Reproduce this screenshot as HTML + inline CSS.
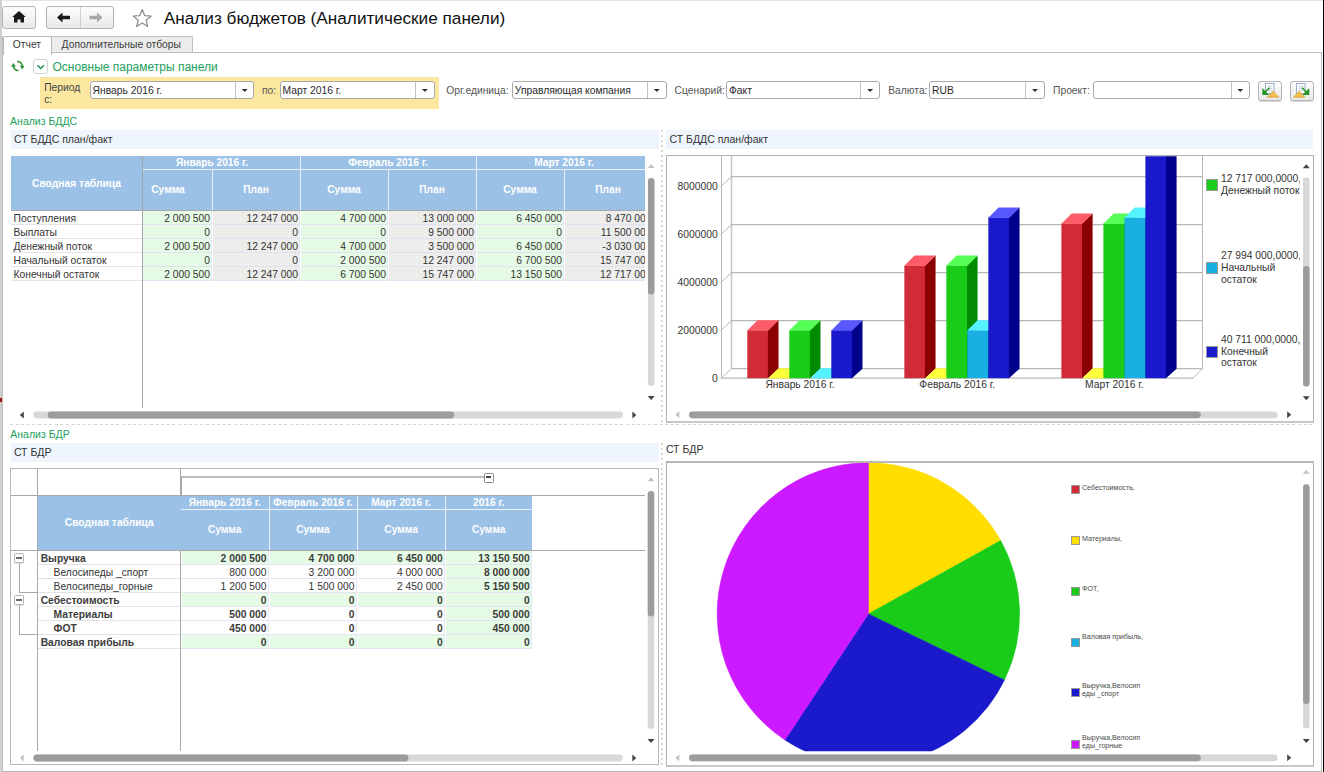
<!DOCTYPE html>
<html><head><meta charset="utf-8"><title>Анализ бюджетов</title>
<style>
html,body{margin:0;padding:0;}
body{width:1324px;height:772px;overflow:hidden;position:relative;background:#fff;font-family:"Liberation Sans", sans-serif;}
.t{position:absolute;white-space:nowrap;}
.r{position:absolute;box-sizing:content-box;}
.btn{position:absolute;border:1px solid #b4b4b4;border-radius:3px;background:linear-gradient(#fdfdfd,#e9e9e9);}
svg.ov{position:absolute;left:0;top:0;}
</style></head><body>
<div class="r" style="left:0.00px;top:0.00px;width:1323.00px;height:1.00px;background:#e2e2e2;"></div>
<div class="r" style="left:0.00px;top:0.00px;width:2.00px;height:772.00px;background:#cfcfcf;"></div>
<div class="r" style="left:2.00px;top:36.00px;width:1.00px;height:736.00px;background:#bdbdbd;"></div>
<div class="r" style="left:0.00px;top:398.00px;width:2.00px;height:4.00px;background:#a81212;"></div>
<div class="btn" style="left:2px;top:6px;width:32px;height:21px;"></div>
<div class="btn" style="left:46px;top:6px;width:66px;height:21px;"></div>
<div class="r" style="left:80.00px;top:7.00px;width:1.00px;height:21.00px;background:#cfcfcf;"></div>
<div class="t" style="left:163.80px;top:8.93px;font-size:17.20px;line-height:19.21px;color:#111;">Анализ бюджетов (Аналитические панели)</div>
<div class="r" style="left:51px;top:36px;width:140px;height:16px;background:#ececec;border:1px solid #c0c0c0;border-bottom:none;border-radius:2px 2px 0 0;"></div>
<div class="r" style="left:50.00px;top:52.00px;width:1272.00px;height:1.00px;background:#bcbcbc;"></div>
<div class="r" style="left:3px;top:35.5px;width:46.5px;height:18px;background:#fff;border:1px solid #b8b8b8;border-bottom:none;border-radius:2px 2px 0 0;"></div>
<div class="t" style="left:12.80px;top:39.08px;font-size:10.30px;line-height:11.51px;color:#3a3a3a;">Отчет</div>
<div class="t" style="left:61.60px;top:39.08px;font-size:10.30px;line-height:11.51px;color:#3a3a3a;">Дополнительные отборы</div>
<div class="r" style="left:1321.00px;top:52.00px;width:1.00px;height:720.00px;background:#bcbcbc;"></div>
<div class="r" style="left:1323.00px;top:0.00px;width:1.00px;height:772.00px;background:#000;"></div>
<div class="r" style="left:3.00px;top:771.00px;width:1319.00px;height:1.00px;background:#b8b8b8;"></div>
<div class="r" style="left:33.2px;top:59.2px;width:13.3px;height:13.3px;border:1px solid #d2d2d2;border-radius:3px;background:#fff;"></div>
<div class="t" style="left:52.50px;top:61.04px;font-size:12.00px;line-height:13.40px;color:#22a05c;">Основные параметры панели</div>
<div class="r" style="left:40.00px;top:77.00px;width:399.00px;height:32.00px;background:#fbe7a0;"></div>
<div class="t" style="left:44.20px;top:82.38px;font-size:10.30px;line-height:11.51px;color:#444;">Период</div>
<div class="t" style="left:44.20px;top:94.18px;font-size:10.30px;line-height:11.51px;color:#444;">с:</div>
<div class="r" style="left:89.8px;top:81px;width:162.6px;height:16px;border:1px solid #a9a9a9;border-radius:3px;background:#fff;"></div>
<div class="r" style="left:235.00px;top:82.00px;width:1.00px;height:16.00px;background:#c4c4c4;"></div>
<div class="t" style="left:92.60px;top:84.68px;font-size:10.30px;line-height:11.51px;color:#2a2a2a;">Январь 2016 г.</div>
<div class="t" style="left:262.00px;top:84.68px;font-size:10.30px;line-height:11.51px;color:#555;">по:</div>
<div class="r" style="left:279.8px;top:81px;width:153.0px;height:16px;border:1px solid #a9a9a9;border-radius:3px;background:#fff;"></div>
<div class="r" style="left:415.00px;top:82.00px;width:1.00px;height:16.00px;background:#c4c4c4;"></div>
<div class="t" style="left:282.60px;top:84.68px;font-size:10.30px;line-height:11.51px;color:#2a2a2a;">Март 2016 г.</div>
<div class="t" style="left:446.30px;top:84.68px;font-size:10.30px;line-height:11.51px;color:#555;">Орг.единица:</div>
<div class="r" style="left:512.0px;top:81px;width:152.6px;height:16px;border:1px solid #a9a9a9;border-radius:3px;background:#fff;"></div>
<div class="r" style="left:647.00px;top:82.00px;width:1.00px;height:16.00px;background:#c4c4c4;"></div>
<div class="t" style="left:514.80px;top:84.68px;font-size:10.30px;line-height:11.51px;color:#2a2a2a;">Управляющая компания</div>
<div class="t" style="left:674.50px;top:84.68px;font-size:10.30px;line-height:11.51px;color:#555;">Сценарий:</div>
<div class="r" style="left:726.2px;top:81px;width:152.1px;height:16px;border:1px solid #a9a9a9;border-radius:3px;background:#fff;"></div>
<div class="r" style="left:860.00px;top:82.00px;width:1.00px;height:16.00px;background:#c4c4c4;"></div>
<div class="t" style="left:729.00px;top:84.68px;font-size:10.30px;line-height:11.51px;color:#2a2a2a;">Факт</div>
<div class="t" style="left:888.20px;top:84.68px;font-size:10.30px;line-height:11.51px;color:#555;">Валюта:</div>
<div class="r" style="left:929.3px;top:81px;width:113.7px;height:16px;border:1px solid #a9a9a9;border-radius:3px;background:#fff;"></div>
<div class="r" style="left:1025.00px;top:82.00px;width:1.00px;height:16.00px;background:#c4c4c4;"></div>
<div class="t" style="left:932.10px;top:84.68px;font-size:10.30px;line-height:11.51px;color:#2a2a2a;">RUB</div>
<div class="t" style="left:1053.00px;top:84.68px;font-size:10.30px;line-height:11.51px;color:#555;">Проект:</div>
<div class="r" style="left:1093.0px;top:81px;width:155.0px;height:16px;border:1px solid #a9a9a9;border-radius:3px;background:#fff;"></div>
<div class="r" style="left:1230.50px;top:82.00px;width:1.00px;height:16.00px;background:#c4c4c4;"></div>
<div class="btn" style="left:1258.0px;top:80.5px;width:22px;height:18.5px;box-shadow:0 1px 0 #d8d8d8;"></div>
<div class="btn" style="left:1289.5px;top:80.5px;width:22px;height:18.5px;box-shadow:0 1px 0 #d8d8d8;"></div>
<div class="t" style="left:10.10px;top:115.70px;font-size:10.50px;line-height:11.73px;color:#22a05c;">Анализ БДДС</div>
<div class="r" style="left:10.50px;top:130.00px;width:648.50px;height:19.00px;background:#eef5fd;"></div>
<div class="t" style="left:14.00px;top:134.30px;font-size:10.50px;line-height:11.73px;color:#333;">СТ БДДС план/факт</div>
<div class="r" style="left:11px;top:155px;width:634px;height:260px;overflow:hidden;">
<div class="r" style="left:0.00px;top:0.80px;width:641.00px;height:54.20px;background:#9bc1e6;"></div>
<div class="r" style="left:131.00px;top:14.00px;width:510.00px;height:1.00px;background:#e8f0fa;"></div>
<div class="r" style="left:201.00px;top:15.00px;width:1.00px;height:40.00px;background:#e8f0fa;"></div>
<div class="r" style="left:289.00px;top:0.80px;width:1.00px;height:54.20px;background:#e8f0fa;"></div>
<div class="r" style="left:377.00px;top:15.00px;width:1.00px;height:40.00px;background:#e8f0fa;"></div>
<div class="r" style="left:465.00px;top:0.80px;width:1.00px;height:54.20px;background:#e8f0fa;"></div>
<div class="r" style="left:553.00px;top:15.00px;width:1.00px;height:40.00px;background:#e8f0fa;"></div>
<div class="r" style="left:131.00px;top:0.80px;width:1.00px;height:252.20px;background:#a6a6a6;"></div>
<div class="r" style="left:0.00px;top:54.50px;width:641.00px;height:1.50px;background:#a8a8a8;"></div>
<div class="t" style="left:0.00px;width:131.00px;text-align:center;top:22.68px;font-size:10.30px;line-height:11.51px;color:#fff;font-weight:bold;">Сводная таблица</div>
<div class="t" style="left:113.00px;width:176.00px;text-align:center;top:1.77px;font-size:10.20px;line-height:11.39px;color:#fff;font-weight:bold;">Январь 2016 г.</div>
<div class="t" style="left:289.00px;width:176.00px;text-align:center;top:1.77px;font-size:10.20px;line-height:11.39px;color:#fff;font-weight:bold;">Февраль 2016 г.</div>
<div class="t" style="left:465.00px;width:176.00px;text-align:center;top:1.77px;font-size:10.20px;line-height:11.39px;color:#fff;font-weight:bold;">Март 2016 г.</div>
<div class="t" style="left:113.00px;width:88.00px;text-align:center;top:28.97px;font-size:10.20px;line-height:11.39px;color:#fff;font-weight:bold;">Сумма</div>
<div class="t" style="left:201.00px;width:88.00px;text-align:center;top:28.97px;font-size:10.20px;line-height:11.39px;color:#fff;font-weight:bold;">План</div>
<div class="t" style="left:289.00px;width:88.00px;text-align:center;top:28.97px;font-size:10.20px;line-height:11.39px;color:#fff;font-weight:bold;">Сумма</div>
<div class="t" style="left:377.00px;width:88.00px;text-align:center;top:28.97px;font-size:10.20px;line-height:11.39px;color:#fff;font-weight:bold;">План</div>
<div class="t" style="left:465.00px;width:88.00px;text-align:center;top:28.97px;font-size:10.20px;line-height:11.39px;color:#fff;font-weight:bold;">Сумма</div>
<div class="t" style="left:553.00px;width:88.00px;text-align:center;top:28.97px;font-size:10.20px;line-height:11.39px;color:#fff;font-weight:bold;">План</div>
<div class="r" style="left:0.00px;top:69.00px;width:131.00px;height:1.00px;background:#e4e4e4;"></div>
<div class="t" style="left:2.50px;top:57.58px;font-size:10.30px;line-height:11.51px;color:#333;">Поступления</div>
<div class="r" style="left:132.00px;top:56.00px;width:69.00px;height:13.00px;background:#e6fbe6;"></div>
<div class="r" style="left:132.00px;top:69.00px;width:69.00px;height:1.00px;background:#e2e2f2;"></div>
<div class="r" style="left:200.00px;top:56.00px;width:1.00px;height:13.00px;background:#e8e8f2;"></div>
<div class="t" style="left:-1.00px;width:200px;text-align:right;top:57.58px;font-size:10.30px;line-height:11.51px;color:#333;">2 000 500</div>
<div class="r" style="left:202.00px;top:56.00px;width:87.00px;height:13.00px;background:#e7e7e7;background-image:linear-gradient(90deg,transparent 1px,#efefed 1px),linear-gradient(transparent 1px,#efefed 1px);background-size:2px 2px;"></div>
<div class="r" style="left:202.00px;top:69.00px;width:87.00px;height:1.00px;background:#e2e2f2;"></div>
<div class="r" style="left:288.00px;top:56.00px;width:1.00px;height:13.00px;background:#e8e8f2;"></div>
<div class="t" style="left:87.00px;width:200px;text-align:right;top:57.58px;font-size:10.30px;line-height:11.51px;color:#333;">12 247 000</div>
<div class="r" style="left:290.00px;top:56.00px;width:87.00px;height:13.00px;background:#e6fbe6;"></div>
<div class="r" style="left:290.00px;top:69.00px;width:87.00px;height:1.00px;background:#e2e2f2;"></div>
<div class="r" style="left:376.00px;top:56.00px;width:1.00px;height:13.00px;background:#e8e8f2;"></div>
<div class="t" style="left:175.00px;width:200px;text-align:right;top:57.58px;font-size:10.30px;line-height:11.51px;color:#333;">4 700 000</div>
<div class="r" style="left:378.00px;top:56.00px;width:87.00px;height:13.00px;background:#e7e7e7;background-image:linear-gradient(90deg,transparent 1px,#efefed 1px),linear-gradient(transparent 1px,#efefed 1px);background-size:2px 2px;"></div>
<div class="r" style="left:378.00px;top:69.00px;width:87.00px;height:1.00px;background:#e2e2f2;"></div>
<div class="r" style="left:464.00px;top:56.00px;width:1.00px;height:13.00px;background:#e8e8f2;"></div>
<div class="t" style="left:263.00px;width:200px;text-align:right;top:57.58px;font-size:10.30px;line-height:11.51px;color:#333;">13 000 000</div>
<div class="r" style="left:466.00px;top:56.00px;width:87.00px;height:13.00px;background:#e6fbe6;"></div>
<div class="r" style="left:466.00px;top:69.00px;width:87.00px;height:1.00px;background:#e2e2f2;"></div>
<div class="r" style="left:552.00px;top:56.00px;width:1.00px;height:13.00px;background:#e8e8f2;"></div>
<div class="t" style="left:351.00px;width:200px;text-align:right;top:57.58px;font-size:10.30px;line-height:11.51px;color:#333;">6 450 000</div>
<div class="r" style="left:554.00px;top:56.00px;width:87.00px;height:13.00px;background:#e7e7e7;background-image:linear-gradient(90deg,transparent 1px,#efefed 1px),linear-gradient(transparent 1px,#efefed 1px);background-size:2px 2px;"></div>
<div class="r" style="left:554.00px;top:69.00px;width:87.00px;height:1.00px;background:#e2e2f2;"></div>
<div class="r" style="left:640.00px;top:56.00px;width:1.00px;height:13.00px;background:#e8e8f2;"></div>
<div class="t" style="left:440.50px;width:200px;text-align:right;top:57.58px;font-size:10.30px;line-height:11.51px;color:#333;">8 470 000</div>
<div class="r" style="left:0.00px;top:83.00px;width:131.00px;height:1.00px;background:#e4e4e4;"></div>
<div class="t" style="left:2.50px;top:71.58px;font-size:10.30px;line-height:11.51px;color:#333;">Выплаты</div>
<div class="r" style="left:132.00px;top:70.00px;width:69.00px;height:13.00px;background:#e6fbe6;"></div>
<div class="r" style="left:132.00px;top:83.00px;width:69.00px;height:1.00px;background:#e2e2f2;"></div>
<div class="r" style="left:200.00px;top:70.00px;width:1.00px;height:13.00px;background:#e8e8f2;"></div>
<div class="t" style="left:-1.00px;width:200px;text-align:right;top:71.58px;font-size:10.30px;line-height:11.51px;color:#333;">0</div>
<div class="r" style="left:202.00px;top:70.00px;width:87.00px;height:13.00px;background:#e7e7e7;background-image:linear-gradient(90deg,transparent 1px,#efefed 1px),linear-gradient(transparent 1px,#efefed 1px);background-size:2px 2px;"></div>
<div class="r" style="left:202.00px;top:83.00px;width:87.00px;height:1.00px;background:#e2e2f2;"></div>
<div class="r" style="left:288.00px;top:70.00px;width:1.00px;height:13.00px;background:#e8e8f2;"></div>
<div class="t" style="left:87.00px;width:200px;text-align:right;top:71.58px;font-size:10.30px;line-height:11.51px;color:#333;">0</div>
<div class="r" style="left:290.00px;top:70.00px;width:87.00px;height:13.00px;background:#e6fbe6;"></div>
<div class="r" style="left:290.00px;top:83.00px;width:87.00px;height:1.00px;background:#e2e2f2;"></div>
<div class="r" style="left:376.00px;top:70.00px;width:1.00px;height:13.00px;background:#e8e8f2;"></div>
<div class="t" style="left:175.00px;width:200px;text-align:right;top:71.58px;font-size:10.30px;line-height:11.51px;color:#333;">0</div>
<div class="r" style="left:378.00px;top:70.00px;width:87.00px;height:13.00px;background:#e7e7e7;background-image:linear-gradient(90deg,transparent 1px,#efefed 1px),linear-gradient(transparent 1px,#efefed 1px);background-size:2px 2px;"></div>
<div class="r" style="left:378.00px;top:83.00px;width:87.00px;height:1.00px;background:#e2e2f2;"></div>
<div class="r" style="left:464.00px;top:70.00px;width:1.00px;height:13.00px;background:#e8e8f2;"></div>
<div class="t" style="left:263.00px;width:200px;text-align:right;top:71.58px;font-size:10.30px;line-height:11.51px;color:#333;">9 500 000</div>
<div class="r" style="left:466.00px;top:70.00px;width:87.00px;height:13.00px;background:#e6fbe6;"></div>
<div class="r" style="left:466.00px;top:83.00px;width:87.00px;height:1.00px;background:#e2e2f2;"></div>
<div class="r" style="left:552.00px;top:70.00px;width:1.00px;height:13.00px;background:#e8e8f2;"></div>
<div class="t" style="left:351.00px;width:200px;text-align:right;top:71.58px;font-size:10.30px;line-height:11.51px;color:#333;">0</div>
<div class="r" style="left:554.00px;top:70.00px;width:87.00px;height:13.00px;background:#e7e7e7;background-image:linear-gradient(90deg,transparent 1px,#efefed 1px),linear-gradient(transparent 1px,#efefed 1px);background-size:2px 2px;"></div>
<div class="r" style="left:554.00px;top:83.00px;width:87.00px;height:1.00px;background:#e2e2f2;"></div>
<div class="r" style="left:640.00px;top:70.00px;width:1.00px;height:13.00px;background:#e8e8f2;"></div>
<div class="t" style="left:440.50px;width:200px;text-align:right;top:71.58px;font-size:10.30px;line-height:11.51px;color:#333;">11 500 000</div>
<div class="r" style="left:0.00px;top:97.00px;width:131.00px;height:1.00px;background:#e4e4e4;"></div>
<div class="t" style="left:2.50px;top:85.58px;font-size:10.30px;line-height:11.51px;color:#333;">Денежный поток</div>
<div class="r" style="left:132.00px;top:84.00px;width:69.00px;height:13.00px;background:#e6fbe6;"></div>
<div class="r" style="left:132.00px;top:97.00px;width:69.00px;height:1.00px;background:#e2e2f2;"></div>
<div class="r" style="left:200.00px;top:84.00px;width:1.00px;height:13.00px;background:#e8e8f2;"></div>
<div class="t" style="left:-1.00px;width:200px;text-align:right;top:85.58px;font-size:10.30px;line-height:11.51px;color:#333;">2 000 500</div>
<div class="r" style="left:202.00px;top:84.00px;width:87.00px;height:13.00px;background:#e7e7e7;background-image:linear-gradient(90deg,transparent 1px,#efefed 1px),linear-gradient(transparent 1px,#efefed 1px);background-size:2px 2px;"></div>
<div class="r" style="left:202.00px;top:97.00px;width:87.00px;height:1.00px;background:#e2e2f2;"></div>
<div class="r" style="left:288.00px;top:84.00px;width:1.00px;height:13.00px;background:#e8e8f2;"></div>
<div class="t" style="left:87.00px;width:200px;text-align:right;top:85.58px;font-size:10.30px;line-height:11.51px;color:#333;">12 247 000</div>
<div class="r" style="left:290.00px;top:84.00px;width:87.00px;height:13.00px;background:#e6fbe6;"></div>
<div class="r" style="left:290.00px;top:97.00px;width:87.00px;height:1.00px;background:#e2e2f2;"></div>
<div class="r" style="left:376.00px;top:84.00px;width:1.00px;height:13.00px;background:#e8e8f2;"></div>
<div class="t" style="left:175.00px;width:200px;text-align:right;top:85.58px;font-size:10.30px;line-height:11.51px;color:#333;">4 700 000</div>
<div class="r" style="left:378.00px;top:84.00px;width:87.00px;height:13.00px;background:#e7e7e7;background-image:linear-gradient(90deg,transparent 1px,#efefed 1px),linear-gradient(transparent 1px,#efefed 1px);background-size:2px 2px;"></div>
<div class="r" style="left:378.00px;top:97.00px;width:87.00px;height:1.00px;background:#e2e2f2;"></div>
<div class="r" style="left:464.00px;top:84.00px;width:1.00px;height:13.00px;background:#e8e8f2;"></div>
<div class="t" style="left:263.00px;width:200px;text-align:right;top:85.58px;font-size:10.30px;line-height:11.51px;color:#333;">3 500 000</div>
<div class="r" style="left:466.00px;top:84.00px;width:87.00px;height:13.00px;background:#e6fbe6;"></div>
<div class="r" style="left:466.00px;top:97.00px;width:87.00px;height:1.00px;background:#e2e2f2;"></div>
<div class="r" style="left:552.00px;top:84.00px;width:1.00px;height:13.00px;background:#e8e8f2;"></div>
<div class="t" style="left:351.00px;width:200px;text-align:right;top:85.58px;font-size:10.30px;line-height:11.51px;color:#333;">6 450 000</div>
<div class="r" style="left:554.00px;top:84.00px;width:87.00px;height:13.00px;background:#e7e7e7;background-image:linear-gradient(90deg,transparent 1px,#efefed 1px),linear-gradient(transparent 1px,#efefed 1px);background-size:2px 2px;"></div>
<div class="r" style="left:554.00px;top:97.00px;width:87.00px;height:1.00px;background:#e2e2f2;"></div>
<div class="r" style="left:640.00px;top:84.00px;width:1.00px;height:13.00px;background:#e8e8f2;"></div>
<div class="t" style="left:440.50px;width:200px;text-align:right;top:85.58px;font-size:10.30px;line-height:11.51px;color:#333;">-3 030 000</div>
<div class="r" style="left:0.00px;top:111.00px;width:131.00px;height:1.00px;background:#e4e4e4;"></div>
<div class="t" style="left:2.50px;top:99.58px;font-size:10.30px;line-height:11.51px;color:#333;">Начальный остаток</div>
<div class="r" style="left:132.00px;top:98.00px;width:69.00px;height:13.00px;background:#e6fbe6;"></div>
<div class="r" style="left:132.00px;top:111.00px;width:69.00px;height:1.00px;background:#e2e2f2;"></div>
<div class="r" style="left:200.00px;top:98.00px;width:1.00px;height:13.00px;background:#e8e8f2;"></div>
<div class="t" style="left:-1.00px;width:200px;text-align:right;top:99.58px;font-size:10.30px;line-height:11.51px;color:#333;">0</div>
<div class="r" style="left:202.00px;top:98.00px;width:87.00px;height:13.00px;background:#e7e7e7;background-image:linear-gradient(90deg,transparent 1px,#efefed 1px),linear-gradient(transparent 1px,#efefed 1px);background-size:2px 2px;"></div>
<div class="r" style="left:202.00px;top:111.00px;width:87.00px;height:1.00px;background:#e2e2f2;"></div>
<div class="r" style="left:288.00px;top:98.00px;width:1.00px;height:13.00px;background:#e8e8f2;"></div>
<div class="t" style="left:87.00px;width:200px;text-align:right;top:99.58px;font-size:10.30px;line-height:11.51px;color:#333;">0</div>
<div class="r" style="left:290.00px;top:98.00px;width:87.00px;height:13.00px;background:#e6fbe6;"></div>
<div class="r" style="left:290.00px;top:111.00px;width:87.00px;height:1.00px;background:#e2e2f2;"></div>
<div class="r" style="left:376.00px;top:98.00px;width:1.00px;height:13.00px;background:#e8e8f2;"></div>
<div class="t" style="left:175.00px;width:200px;text-align:right;top:99.58px;font-size:10.30px;line-height:11.51px;color:#333;">2 000 500</div>
<div class="r" style="left:378.00px;top:98.00px;width:87.00px;height:13.00px;background:#e7e7e7;background-image:linear-gradient(90deg,transparent 1px,#efefed 1px),linear-gradient(transparent 1px,#efefed 1px);background-size:2px 2px;"></div>
<div class="r" style="left:378.00px;top:111.00px;width:87.00px;height:1.00px;background:#e2e2f2;"></div>
<div class="r" style="left:464.00px;top:98.00px;width:1.00px;height:13.00px;background:#e8e8f2;"></div>
<div class="t" style="left:263.00px;width:200px;text-align:right;top:99.58px;font-size:10.30px;line-height:11.51px;color:#333;">12 247 000</div>
<div class="r" style="left:466.00px;top:98.00px;width:87.00px;height:13.00px;background:#e6fbe6;"></div>
<div class="r" style="left:466.00px;top:111.00px;width:87.00px;height:1.00px;background:#e2e2f2;"></div>
<div class="r" style="left:552.00px;top:98.00px;width:1.00px;height:13.00px;background:#e8e8f2;"></div>
<div class="t" style="left:351.00px;width:200px;text-align:right;top:99.58px;font-size:10.30px;line-height:11.51px;color:#333;">6 700 500</div>
<div class="r" style="left:554.00px;top:98.00px;width:87.00px;height:13.00px;background:#e7e7e7;background-image:linear-gradient(90deg,transparent 1px,#efefed 1px),linear-gradient(transparent 1px,#efefed 1px);background-size:2px 2px;"></div>
<div class="r" style="left:554.00px;top:111.00px;width:87.00px;height:1.00px;background:#e2e2f2;"></div>
<div class="r" style="left:640.00px;top:98.00px;width:1.00px;height:13.00px;background:#e8e8f2;"></div>
<div class="t" style="left:440.50px;width:200px;text-align:right;top:99.58px;font-size:10.30px;line-height:11.51px;color:#333;">15 747 000</div>
<div class="r" style="left:0.00px;top:125.00px;width:131.00px;height:1.00px;background:#e4e4e4;"></div>
<div class="t" style="left:2.50px;top:113.58px;font-size:10.30px;line-height:11.51px;color:#333;">Конечный остаток</div>
<div class="r" style="left:132.00px;top:112.00px;width:69.00px;height:13.00px;background:#e6fbe6;"></div>
<div class="r" style="left:132.00px;top:125.00px;width:69.00px;height:1.00px;background:#e2e2f2;"></div>
<div class="r" style="left:200.00px;top:112.00px;width:1.00px;height:13.00px;background:#e8e8f2;"></div>
<div class="t" style="left:-1.00px;width:200px;text-align:right;top:113.58px;font-size:10.30px;line-height:11.51px;color:#333;">2 000 500</div>
<div class="r" style="left:202.00px;top:112.00px;width:87.00px;height:13.00px;background:#e7e7e7;background-image:linear-gradient(90deg,transparent 1px,#efefed 1px),linear-gradient(transparent 1px,#efefed 1px);background-size:2px 2px;"></div>
<div class="r" style="left:202.00px;top:125.00px;width:87.00px;height:1.00px;background:#e2e2f2;"></div>
<div class="r" style="left:288.00px;top:112.00px;width:1.00px;height:13.00px;background:#e8e8f2;"></div>
<div class="t" style="left:87.00px;width:200px;text-align:right;top:113.58px;font-size:10.30px;line-height:11.51px;color:#333;">12 247 000</div>
<div class="r" style="left:290.00px;top:112.00px;width:87.00px;height:13.00px;background:#e6fbe6;"></div>
<div class="r" style="left:290.00px;top:125.00px;width:87.00px;height:1.00px;background:#e2e2f2;"></div>
<div class="r" style="left:376.00px;top:112.00px;width:1.00px;height:13.00px;background:#e8e8f2;"></div>
<div class="t" style="left:175.00px;width:200px;text-align:right;top:113.58px;font-size:10.30px;line-height:11.51px;color:#333;">6 700 500</div>
<div class="r" style="left:378.00px;top:112.00px;width:87.00px;height:13.00px;background:#e7e7e7;background-image:linear-gradient(90deg,transparent 1px,#efefed 1px),linear-gradient(transparent 1px,#efefed 1px);background-size:2px 2px;"></div>
<div class="r" style="left:378.00px;top:125.00px;width:87.00px;height:1.00px;background:#e2e2f2;"></div>
<div class="r" style="left:464.00px;top:112.00px;width:1.00px;height:13.00px;background:#e8e8f2;"></div>
<div class="t" style="left:263.00px;width:200px;text-align:right;top:113.58px;font-size:10.30px;line-height:11.51px;color:#333;">15 747 000</div>
<div class="r" style="left:466.00px;top:112.00px;width:87.00px;height:13.00px;background:#e6fbe6;"></div>
<div class="r" style="left:466.00px;top:125.00px;width:87.00px;height:1.00px;background:#e2e2f2;"></div>
<div class="r" style="left:552.00px;top:112.00px;width:1.00px;height:13.00px;background:#e8e8f2;"></div>
<div class="t" style="left:351.00px;width:200px;text-align:right;top:113.58px;font-size:10.30px;line-height:11.51px;color:#333;">13 150 500</div>
<div class="r" style="left:554.00px;top:112.00px;width:87.00px;height:13.00px;background:#e7e7e7;background-image:linear-gradient(90deg,transparent 1px,#efefed 1px),linear-gradient(transparent 1px,#efefed 1px);background-size:2px 2px;"></div>
<div class="r" style="left:554.00px;top:125.00px;width:87.00px;height:1.00px;background:#e2e2f2;"></div>
<div class="r" style="left:640.00px;top:112.00px;width:1.00px;height:13.00px;background:#e8e8f2;"></div>
<div class="t" style="left:440.50px;width:200px;text-align:right;top:113.58px;font-size:10.30px;line-height:11.51px;color:#333;">12 717 000</div>
</div>
<div class="r" style="left:666.30px;top:130.00px;width:647.00px;height:19.00px;background:#eef5fd;"></div>
<div class="t" style="left:669.50px;top:134.30px;font-size:10.50px;line-height:11.73px;color:#333;">СТ БДДС план/факт</div>
<div class="r" style="left:666px;top:155px;width:646px;height:265px;border:1px solid #b0b0b0;border-bottom:2px solid #c8c8c8;"></div>
<div class="t" style="right:606.40px;top:372.68px;font-size:10.30px;line-height:11.51px;color:#333;">0</div>
<div class="t" style="right:606.40px;top:324.68px;font-size:10.30px;line-height:11.51px;color:#333;">2000000</div>
<div class="t" style="right:606.40px;top:276.68px;font-size:10.30px;line-height:11.51px;color:#333;">4000000</div>
<div class="t" style="right:606.40px;top:228.68px;font-size:10.30px;line-height:11.51px;color:#333;">6000000</div>
<div class="t" style="right:606.40px;top:180.68px;font-size:10.30px;line-height:11.51px;color:#333;">8000000</div>
<div class="t" style="left:740.09px;width:120.00px;text-align:center;top:379.08px;font-size:10.30px;line-height:11.51px;color:#333;">Январь 2016 г.</div>
<div class="t" style="left:897.25px;width:120.00px;text-align:center;top:379.08px;font-size:10.30px;line-height:11.51px;color:#333;">Февраль 2016 г.</div>
<div class="t" style="left:1054.42px;width:120.00px;text-align:center;top:379.08px;font-size:10.30px;line-height:11.51px;color:#333;">Март 2016 г.</div>
<div class="r" style="left:1203px;top:156px;width:97px;height:240px;overflow:hidden;">
<div class="r" style="left:2.5px;top:22.60px;width:10px;height:10px;background:#19cc19;border:1px solid #9a9a9a;"></div>
<div class="t" style="left:18px;top:16.98px;font-size:10.30px;line-height:11.51px;color:#333;">12 717 000,0000,</div>
<div class="t" style="left:18px;top:28.58px;font-size:10.30px;line-height:11.51px;color:#333;">Денежный поток</div>
<div class="r" style="left:2.5px;top:106.40px;width:10px;height:10px;background:#1aafe2;border:1px solid #9a9a9a;"></div>
<div class="t" style="left:18px;top:94.38px;font-size:10.30px;line-height:11.51px;color:#333;">27 994 000,0000,</div>
<div class="t" style="left:18px;top:105.98px;font-size:10.30px;line-height:11.51px;color:#333;">Начальный</div>
<div class="t" style="left:18px;top:117.58px;font-size:10.30px;line-height:11.51px;color:#333;">остаток</div>
<div class="r" style="left:2.5px;top:189.70px;width:10px;height:10px;background:#1a1acc;border:1px solid #9a9a9a;"></div>
<div class="t" style="left:18px;top:178.28px;font-size:10.30px;line-height:11.51px;color:#333;">40 711 000,0000,</div>
<div class="t" style="left:18px;top:189.88px;font-size:10.30px;line-height:11.51px;color:#333;">Конечный</div>
<div class="t" style="left:18px;top:201.48px;font-size:10.30px;line-height:11.51px;color:#333;">остаток</div>
</div>
<div class="r" style="left:10px;top:424px;width:1304px;height:1px;background:repeating-linear-gradient(90deg,#d4d4d4 0 3px,transparent 3px 5.6px);"></div>
<div class="r" style="left:661px;top:129.5px;width:2px;height:293px;background:repeating-linear-gradient(180deg,#d6d6d6 0 2px,transparent 2px 5px);"></div>
<div class="r" style="left:661px;top:442.8px;width:2px;height:324px;background:repeating-linear-gradient(180deg,#d6d6d6 0 2px,transparent 2px 5px);"></div>
<div class="t" style="left:10.30px;top:428.80px;font-size:10.50px;line-height:11.73px;color:#22a05c;">Анализ БДР</div>
<div class="r" style="left:10.50px;top:443.00px;width:648.50px;height:19.00px;background:#eef5fd;"></div>
<div class="t" style="left:13.90px;top:447.30px;font-size:10.50px;line-height:11.73px;color:#333;">СТ БДР</div>
<div class="r" style="left:10px;top:468px;width:646.5px;height:295px;border:1.4px solid #b8b8b8;"></div>
<div class="r" style="left:37.00px;top:469.00px;width:1.00px;height:282.00px;background:#a8a8a8;"></div>
<div class="r" style="left:180.00px;top:469.00px;width:1.00px;height:282.00px;background:#a8a8a8;"></div>
<div class="r" style="left:11.00px;top:495.00px;width:634.00px;height:1.00px;background:#a8a8a8;"></div>
<div class="r" style="left:181.00px;top:476.20px;width:303.50px;height:1.60px;background:#bdbdbd;"></div>
<div class="r" style="left:181.00px;top:476.50px;width:1.00px;height:19.00px;background:#a8a8a8;"></div>
<div class="r" style="left:484px;top:472.5px;width:8px;height:8px;border:1px solid #8a8a8a;background:#fff;border-radius:1.5px;"></div>
<div class="r" style="left:486.00px;top:476.30px;width:5.00px;height:1.50px;background:#444;"></div>
<div class="r" style="left:38.00px;top:496.00px;width:494.20px;height:54.30px;background:#9bc1e6;"></div>
<div class="r" style="left:181.00px;top:509.00px;width:351.20px;height:1.00px;background:#e8f0fa;"></div>
<div class="r" style="left:268.90px;top:496.00px;width:1.00px;height:54.30px;background:#e8f0fa;"></div>
<div class="r" style="left:356.90px;top:496.00px;width:1.00px;height:54.30px;background:#e8f0fa;"></div>
<div class="r" style="left:445.30px;top:496.00px;width:1.00px;height:54.30px;background:#e8f0fa;"></div>
<div class="r" style="left:11.00px;top:550.00px;width:634.00px;height:1.20px;background:#a8a8a8;"></div>
<div class="t" style="left:38.00px;width:142.50px;text-align:center;top:517.48px;font-size:10.30px;line-height:11.51px;color:#fff;font-weight:bold;">Сводная таблица</div>
<div class="t" style="left:180.50px;width:88.40px;text-align:center;top:496.77px;font-size:10.20px;line-height:11.39px;color:#fff;font-weight:bold;">Январь 2016 г.</div>
<div class="t" style="left:180.50px;width:88.40px;text-align:center;top:524.07px;font-size:10.20px;line-height:11.39px;color:#fff;font-weight:bold;">Сумма</div>
<div class="t" style="left:268.90px;width:88.00px;text-align:center;top:496.77px;font-size:10.20px;line-height:11.39px;color:#fff;font-weight:bold;">Февраль 2016 г.</div>
<div class="t" style="left:268.90px;width:88.00px;text-align:center;top:524.07px;font-size:10.20px;line-height:11.39px;color:#fff;font-weight:bold;">Сумма</div>
<div class="t" style="left:356.90px;width:88.40px;text-align:center;top:496.77px;font-size:10.20px;line-height:11.39px;color:#fff;font-weight:bold;">Март 2016 г.</div>
<div class="t" style="left:356.90px;width:88.40px;text-align:center;top:524.07px;font-size:10.20px;line-height:11.39px;color:#fff;font-weight:bold;">Сумма</div>
<div class="t" style="left:445.30px;width:86.90px;text-align:center;top:496.77px;font-size:10.20px;line-height:11.39px;color:#fff;font-weight:bold;">2016 г.</div>
<div class="t" style="left:445.30px;width:86.90px;text-align:center;top:524.07px;font-size:10.20px;line-height:11.39px;color:#fff;font-weight:bold;">Сумма</div>
<div class="r" style="left:38.00px;top:564.20px;width:142.00px;height:1.00px;background:#e2e2e2;"></div>
<div class="t" style="left:40.70px;top:552.78px;font-size:10.30px;line-height:11.51px;color:#3c3c3c;font-weight:bold;">Выручка</div>
<div class="r" style="left:181.50px;top:551.20px;width:87.40px;height:13.00px;background:#e6fbe6;"></div>
<div class="r" style="left:181.50px;top:564.20px;width:87.40px;height:1.00px;background:#e2e2f2;"></div>
<div class="r" style="left:267.90px;top:551.20px;width:1.00px;height:13.00px;background:#e6e6f2;"></div>
<div class="t" style="right:1057.60px;top:552.78px;font-size:10.30px;line-height:11.51px;color:#3c3c3c;font-weight:bold;">2 000 500</div>
<div class="r" style="left:269.90px;top:551.20px;width:87.00px;height:13.00px;background:#e6fbe6;"></div>
<div class="r" style="left:269.90px;top:564.20px;width:87.00px;height:1.00px;background:#e2e2f2;"></div>
<div class="r" style="left:355.90px;top:551.20px;width:1.00px;height:13.00px;background:#e6e6f2;"></div>
<div class="t" style="right:969.60px;top:552.78px;font-size:10.30px;line-height:11.51px;color:#3c3c3c;font-weight:bold;">4 700 000</div>
<div class="r" style="left:357.90px;top:551.20px;width:87.40px;height:13.00px;background:#e6fbe6;"></div>
<div class="r" style="left:357.90px;top:564.20px;width:87.40px;height:1.00px;background:#e2e2f2;"></div>
<div class="r" style="left:444.30px;top:551.20px;width:1.00px;height:13.00px;background:#e6e6f2;"></div>
<div class="t" style="right:881.20px;top:552.78px;font-size:10.30px;line-height:11.51px;color:#3c3c3c;font-weight:bold;">6 450 000</div>
<div class="r" style="left:446.30px;top:551.20px;width:85.90px;height:13.00px;background:#e6fbe6;"></div>
<div class="r" style="left:446.30px;top:564.20px;width:85.90px;height:1.00px;background:#e2e2f2;"></div>
<div class="r" style="left:531.20px;top:551.20px;width:1.00px;height:13.00px;background:#e6e6f2;"></div>
<div class="t" style="right:794.30px;top:552.78px;font-size:10.30px;line-height:11.51px;color:#3c3c3c;font-weight:bold;">13 150 500</div>
<div class="r" style="left:38.00px;top:578.20px;width:142.00px;height:1.00px;background:#e2e2e2;"></div>
<div class="t" style="left:53.60px;top:566.78px;font-size:10.30px;line-height:11.51px;color:#333;">Велосипеды _спорт</div>
<div class="r" style="left:181.50px;top:565.20px;width:87.40px;height:13.00px;background:#ffffff;"></div>
<div class="r" style="left:181.50px;top:578.20px;width:87.40px;height:1.00px;background:#e2e2f2;"></div>
<div class="r" style="left:267.90px;top:565.20px;width:1.00px;height:13.00px;background:#e6e6f2;"></div>
<div class="t" style="right:1057.60px;top:566.78px;font-size:10.30px;line-height:11.51px;color:#333;">800 000</div>
<div class="r" style="left:269.90px;top:565.20px;width:87.00px;height:13.00px;background:#ffffff;"></div>
<div class="r" style="left:269.90px;top:578.20px;width:87.00px;height:1.00px;background:#e2e2f2;"></div>
<div class="r" style="left:355.90px;top:565.20px;width:1.00px;height:13.00px;background:#e6e6f2;"></div>
<div class="t" style="right:969.60px;top:566.78px;font-size:10.30px;line-height:11.51px;color:#333;">3 200 000</div>
<div class="r" style="left:357.90px;top:565.20px;width:87.40px;height:13.00px;background:#ffffff;"></div>
<div class="r" style="left:357.90px;top:578.20px;width:87.40px;height:1.00px;background:#e2e2f2;"></div>
<div class="r" style="left:444.30px;top:565.20px;width:1.00px;height:13.00px;background:#e6e6f2;"></div>
<div class="t" style="right:881.20px;top:566.78px;font-size:10.30px;line-height:11.51px;color:#333;">4 000 000</div>
<div class="r" style="left:446.30px;top:565.20px;width:85.90px;height:13.00px;background:#e6fbe6;"></div>
<div class="r" style="left:446.30px;top:578.20px;width:85.90px;height:1.00px;background:#e2e2f2;"></div>
<div class="r" style="left:531.20px;top:565.20px;width:1.00px;height:13.00px;background:#e6e6f2;"></div>
<div class="t" style="right:794.30px;top:566.78px;font-size:10.30px;line-height:11.51px;color:#3c3c3c;font-weight:bold;">8 000 000</div>
<div class="r" style="left:38.00px;top:592.20px;width:142.00px;height:1.00px;background:#e2e2e2;"></div>
<div class="t" style="left:53.60px;top:580.78px;font-size:10.30px;line-height:11.51px;color:#333;">Велосипеды_горные</div>
<div class="r" style="left:181.50px;top:579.20px;width:87.40px;height:13.00px;background:#ffffff;"></div>
<div class="r" style="left:181.50px;top:592.20px;width:87.40px;height:1.00px;background:#e2e2f2;"></div>
<div class="r" style="left:267.90px;top:579.20px;width:1.00px;height:13.00px;background:#e6e6f2;"></div>
<div class="t" style="right:1057.60px;top:580.78px;font-size:10.30px;line-height:11.51px;color:#333;">1 200 500</div>
<div class="r" style="left:269.90px;top:579.20px;width:87.00px;height:13.00px;background:#ffffff;"></div>
<div class="r" style="left:269.90px;top:592.20px;width:87.00px;height:1.00px;background:#e2e2f2;"></div>
<div class="r" style="left:355.90px;top:579.20px;width:1.00px;height:13.00px;background:#e6e6f2;"></div>
<div class="t" style="right:969.60px;top:580.78px;font-size:10.30px;line-height:11.51px;color:#333;">1 500 000</div>
<div class="r" style="left:357.90px;top:579.20px;width:87.40px;height:13.00px;background:#ffffff;"></div>
<div class="r" style="left:357.90px;top:592.20px;width:87.40px;height:1.00px;background:#e2e2f2;"></div>
<div class="r" style="left:444.30px;top:579.20px;width:1.00px;height:13.00px;background:#e6e6f2;"></div>
<div class="t" style="right:881.20px;top:580.78px;font-size:10.30px;line-height:11.51px;color:#333;">2 450 000</div>
<div class="r" style="left:446.30px;top:579.20px;width:85.90px;height:13.00px;background:#e6fbe6;"></div>
<div class="r" style="left:446.30px;top:592.20px;width:85.90px;height:1.00px;background:#e2e2f2;"></div>
<div class="r" style="left:531.20px;top:579.20px;width:1.00px;height:13.00px;background:#e6e6f2;"></div>
<div class="t" style="right:794.30px;top:580.78px;font-size:10.30px;line-height:11.51px;color:#3c3c3c;font-weight:bold;">5 150 500</div>
<div class="r" style="left:38.00px;top:606.20px;width:142.00px;height:1.00px;background:#e2e2e2;"></div>
<div class="t" style="left:40.70px;top:594.78px;font-size:10.30px;line-height:11.51px;color:#3c3c3c;font-weight:bold;">Себестоимость</div>
<div class="r" style="left:181.50px;top:593.20px;width:87.40px;height:13.00px;background:#e6fbe6;"></div>
<div class="r" style="left:181.50px;top:606.20px;width:87.40px;height:1.00px;background:#e2e2f2;"></div>
<div class="r" style="left:267.90px;top:593.20px;width:1.00px;height:13.00px;background:#e6e6f2;"></div>
<div class="t" style="right:1057.60px;top:594.78px;font-size:10.30px;line-height:11.51px;color:#3c3c3c;font-weight:bold;">0</div>
<div class="r" style="left:269.90px;top:593.20px;width:87.00px;height:13.00px;background:#e6fbe6;"></div>
<div class="r" style="left:269.90px;top:606.20px;width:87.00px;height:1.00px;background:#e2e2f2;"></div>
<div class="r" style="left:355.90px;top:593.20px;width:1.00px;height:13.00px;background:#e6e6f2;"></div>
<div class="t" style="right:969.60px;top:594.78px;font-size:10.30px;line-height:11.51px;color:#3c3c3c;font-weight:bold;">0</div>
<div class="r" style="left:357.90px;top:593.20px;width:87.40px;height:13.00px;background:#e6fbe6;"></div>
<div class="r" style="left:357.90px;top:606.20px;width:87.40px;height:1.00px;background:#e2e2f2;"></div>
<div class="r" style="left:444.30px;top:593.20px;width:1.00px;height:13.00px;background:#e6e6f2;"></div>
<div class="t" style="right:881.20px;top:594.78px;font-size:10.30px;line-height:11.51px;color:#3c3c3c;font-weight:bold;">0</div>
<div class="r" style="left:446.30px;top:593.20px;width:85.90px;height:13.00px;background:#e6fbe6;"></div>
<div class="r" style="left:446.30px;top:606.20px;width:85.90px;height:1.00px;background:#e2e2f2;"></div>
<div class="r" style="left:531.20px;top:593.20px;width:1.00px;height:13.00px;background:#e6e6f2;"></div>
<div class="t" style="right:794.30px;top:594.78px;font-size:10.30px;line-height:11.51px;color:#3c3c3c;font-weight:bold;">0</div>
<div class="r" style="left:38.00px;top:620.20px;width:142.00px;height:1.00px;background:#e2e2e2;"></div>
<div class="t" style="left:53.60px;top:608.78px;font-size:10.30px;line-height:11.51px;color:#3c3c3c;font-weight:bold;">Материалы</div>
<div class="r" style="left:181.50px;top:607.20px;width:87.40px;height:13.00px;background:#ffffff;"></div>
<div class="r" style="left:181.50px;top:620.20px;width:87.40px;height:1.00px;background:#e2e2f2;"></div>
<div class="r" style="left:267.90px;top:607.20px;width:1.00px;height:13.00px;background:#e6e6f2;"></div>
<div class="t" style="right:1057.60px;top:608.78px;font-size:10.30px;line-height:11.51px;color:#3c3c3c;font-weight:bold;">500 000</div>
<div class="r" style="left:269.90px;top:607.20px;width:87.00px;height:13.00px;background:#ffffff;"></div>
<div class="r" style="left:269.90px;top:620.20px;width:87.00px;height:1.00px;background:#e2e2f2;"></div>
<div class="r" style="left:355.90px;top:607.20px;width:1.00px;height:13.00px;background:#e6e6f2;"></div>
<div class="t" style="right:969.60px;top:608.78px;font-size:10.30px;line-height:11.51px;color:#3c3c3c;font-weight:bold;">0</div>
<div class="r" style="left:357.90px;top:607.20px;width:87.40px;height:13.00px;background:#ffffff;"></div>
<div class="r" style="left:357.90px;top:620.20px;width:87.40px;height:1.00px;background:#e2e2f2;"></div>
<div class="r" style="left:444.30px;top:607.20px;width:1.00px;height:13.00px;background:#e6e6f2;"></div>
<div class="t" style="right:881.20px;top:608.78px;font-size:10.30px;line-height:11.51px;color:#3c3c3c;font-weight:bold;">0</div>
<div class="r" style="left:446.30px;top:607.20px;width:85.90px;height:13.00px;background:#e6fbe6;"></div>
<div class="r" style="left:446.30px;top:620.20px;width:85.90px;height:1.00px;background:#e2e2f2;"></div>
<div class="r" style="left:531.20px;top:607.20px;width:1.00px;height:13.00px;background:#e6e6f2;"></div>
<div class="t" style="right:794.30px;top:608.78px;font-size:10.30px;line-height:11.51px;color:#3c3c3c;font-weight:bold;">500 000</div>
<div class="r" style="left:38.00px;top:634.20px;width:142.00px;height:1.00px;background:#e2e2e2;"></div>
<div class="t" style="left:53.60px;top:622.78px;font-size:10.30px;line-height:11.51px;color:#3c3c3c;font-weight:bold;">ФОТ</div>
<div class="r" style="left:181.50px;top:621.20px;width:87.40px;height:13.00px;background:#ffffff;"></div>
<div class="r" style="left:181.50px;top:634.20px;width:87.40px;height:1.00px;background:#e2e2f2;"></div>
<div class="r" style="left:267.90px;top:621.20px;width:1.00px;height:13.00px;background:#e6e6f2;"></div>
<div class="t" style="right:1057.60px;top:622.78px;font-size:10.30px;line-height:11.51px;color:#3c3c3c;font-weight:bold;">450 000</div>
<div class="r" style="left:269.90px;top:621.20px;width:87.00px;height:13.00px;background:#ffffff;"></div>
<div class="r" style="left:269.90px;top:634.20px;width:87.00px;height:1.00px;background:#e2e2f2;"></div>
<div class="r" style="left:355.90px;top:621.20px;width:1.00px;height:13.00px;background:#e6e6f2;"></div>
<div class="t" style="right:969.60px;top:622.78px;font-size:10.30px;line-height:11.51px;color:#3c3c3c;font-weight:bold;">0</div>
<div class="r" style="left:357.90px;top:621.20px;width:87.40px;height:13.00px;background:#ffffff;"></div>
<div class="r" style="left:357.90px;top:634.20px;width:87.40px;height:1.00px;background:#e2e2f2;"></div>
<div class="r" style="left:444.30px;top:621.20px;width:1.00px;height:13.00px;background:#e6e6f2;"></div>
<div class="t" style="right:881.20px;top:622.78px;font-size:10.30px;line-height:11.51px;color:#3c3c3c;font-weight:bold;">0</div>
<div class="r" style="left:446.30px;top:621.20px;width:85.90px;height:13.00px;background:#e6fbe6;"></div>
<div class="r" style="left:446.30px;top:634.20px;width:85.90px;height:1.00px;background:#e2e2f2;"></div>
<div class="r" style="left:531.20px;top:621.20px;width:1.00px;height:13.00px;background:#e6e6f2;"></div>
<div class="t" style="right:794.30px;top:622.78px;font-size:10.30px;line-height:11.51px;color:#3c3c3c;font-weight:bold;">450 000</div>
<div class="r" style="left:38.00px;top:648.20px;width:142.00px;height:1.00px;background:#e2e2e2;"></div>
<div class="t" style="left:40.70px;top:636.78px;font-size:10.30px;line-height:11.51px;color:#3c3c3c;font-weight:bold;">Валовая прибыль</div>
<div class="r" style="left:181.50px;top:635.20px;width:87.40px;height:13.00px;background:#e6fbe6;"></div>
<div class="r" style="left:181.50px;top:648.20px;width:87.40px;height:1.00px;background:#e2e2f2;"></div>
<div class="r" style="left:267.90px;top:635.20px;width:1.00px;height:13.00px;background:#e6e6f2;"></div>
<div class="t" style="right:1057.60px;top:636.78px;font-size:10.30px;line-height:11.51px;color:#3c3c3c;font-weight:bold;">0</div>
<div class="r" style="left:269.90px;top:635.20px;width:87.00px;height:13.00px;background:#e6fbe6;"></div>
<div class="r" style="left:269.90px;top:648.20px;width:87.00px;height:1.00px;background:#e2e2f2;"></div>
<div class="r" style="left:355.90px;top:635.20px;width:1.00px;height:13.00px;background:#e6e6f2;"></div>
<div class="t" style="right:969.60px;top:636.78px;font-size:10.30px;line-height:11.51px;color:#3c3c3c;font-weight:bold;">0</div>
<div class="r" style="left:357.90px;top:635.20px;width:87.40px;height:13.00px;background:#e6fbe6;"></div>
<div class="r" style="left:357.90px;top:648.20px;width:87.40px;height:1.00px;background:#e2e2f2;"></div>
<div class="r" style="left:444.30px;top:635.20px;width:1.00px;height:13.00px;background:#e6e6f2;"></div>
<div class="t" style="right:881.20px;top:636.78px;font-size:10.30px;line-height:11.51px;color:#3c3c3c;font-weight:bold;">0</div>
<div class="r" style="left:446.30px;top:635.20px;width:85.90px;height:13.00px;background:#e6fbe6;"></div>
<div class="r" style="left:446.30px;top:648.20px;width:85.90px;height:1.00px;background:#e2e2f2;"></div>
<div class="r" style="left:531.20px;top:635.20px;width:1.00px;height:13.00px;background:#e6e6f2;"></div>
<div class="t" style="right:794.30px;top:636.78px;font-size:10.30px;line-height:11.51px;color:#3c3c3c;font-weight:bold;">0</div>
<div class="r" style="left:14.2px;top:553.20px;width:7.8px;height:7.6px;border:1px solid #b4b4b4;background:#fff;border-radius:1.5px;box-shadow:0 0.5px 0 #ccc;"></div>
<div class="r" style="left:15.90px;top:556.80px;width:6.40px;height:1.80px;background:#6a6a6a;"></div>
<div class="r" style="left:19.00px;top:562.70px;width:1.00px;height:29.70px;background:#a8a8a8;"></div>
<div class="r" style="left:19.00px;top:591.90px;width:18.50px;height:1.00px;background:#a8a8a8;"></div>
<div class="r" style="left:14.2px;top:595.20px;width:7.8px;height:7.6px;border:1px solid #b4b4b4;background:#fff;border-radius:1.5px;box-shadow:0 0.5px 0 #ccc;"></div>
<div class="r" style="left:15.90px;top:598.80px;width:6.40px;height:1.80px;background:#6a6a6a;"></div>
<div class="r" style="left:19.00px;top:604.70px;width:1.00px;height:29.60px;background:#a8a8a8;"></div>
<div class="r" style="left:19.00px;top:633.80px;width:18.50px;height:1.00px;background:#a8a8a8;"></div>
<div class="t" style="left:665.90px;top:443.60px;font-size:10.50px;line-height:11.73px;color:#333;">СТ БДР</div>
<div class="r" style="left:666px;top:461px;width:646px;height:302px;border:1px solid #b0b0b0;border-top:2px solid #b8b8b8;border-bottom:2px solid #c8c8c8;"></div>
<div class="r" style="left:1071px;top:485.00px;width:7px;height:7px;background:#d12b38;border:1px solid #999;"></div>
<div class="t" style="left:1082.00px;top:484.57px;font-size:7.10px;line-height:7.93px;color:#4a4a4a;">Себестоимость,</div>
<div class="r" style="left:1071px;top:536.10px;width:7px;height:7px;background:#ffde00;border:1px solid #999;"></div>
<div class="t" style="left:1082.00px;top:535.87px;font-size:7.10px;line-height:7.93px;color:#4a4a4a;">Материалы,</div>
<div class="r" style="left:1071px;top:586.80px;width:7px;height:7px;background:#19cc19;border:1px solid #999;"></div>
<div class="t" style="left:1082.00px;top:586.37px;font-size:7.10px;line-height:7.93px;color:#4a4a4a;">ФОТ,</div>
<div class="r" style="left:1071px;top:638.20px;width:7px;height:7px;background:#1aafe2;border:1px solid #999;"></div>
<div class="t" style="left:1082.00px;top:633.67px;font-size:7.10px;line-height:7.93px;color:#4a4a4a;">Валовая прибыль,</div>
<div class="r" style="left:1071px;top:688.30px;width:7px;height:7px;background:#1a1acc;border:1px solid #999;"></div>
<div class="t" style="left:1082.00px;top:683.47px;font-size:7.10px;line-height:7.93px;color:#4a4a4a;">Выручка,Велосип</div>
<div class="t" style="left:1082.00px;top:691.47px;font-size:7.10px;line-height:7.93px;color:#4a4a4a;">еды _спорт</div>
<div class="r" style="left:1071px;top:739.50px;width:7px;height:7px;background:#cc19ff;border:1px solid #999;"></div>
<div class="t" style="left:1082.00px;top:734.67px;font-size:7.10px;line-height:7.93px;color:#4a4a4a;">Выручка,Велосип</div>
<div class="t" style="left:1082.00px;top:742.67px;font-size:7.10px;line-height:7.93px;color:#4a4a4a;">еды_горные</div>
<svg class="ov" width="1324" height="772" viewBox="0 0 1324 772">
<path d="M19 11 L12.2 17 L14 17 L14 22.5 L17.5 22.5 L17.5 19.5 L20.5 19.5 L20.5 22.5 L24 22.5 L24 17 L25.8 17 Z" fill="#1a1a1a"/>
<path d="M57 17.5 L62.5 12.5 L62.5 15.8 L70 15.8 L70 19.2 L62.5 19.2 L62.5 22.5 Z" fill="#1a1a1a"/>
<path d="M102.5 17.5 L97 12.5 L97 15.8 L89.5 15.8 L89.5 19.2 L97 19.2 L97 22.5 Z" fill="#a8a8a8"/>
<polygon points="142.20,9.50 144.61,15.58 151.14,16.00 146.10,20.17 147.73,26.50 142.20,23.00 136.67,26.50 138.30,20.17 133.26,16.00 139.79,15.58" fill="none" stroke="#8a8a8a" stroke-width="1.2" stroke-linejoin="round"/>
<g fill="none" stroke="#2e922e" stroke-width="1.5"><path d="M17.04 61.67 A4.4 4.4 0 0 1 22.2 66"/><path d="M18.56 70.33 A4.4 4.4 0 0 1 13.4 66"/></g><path d="M19.9 65.8 L24.5 65.8 L22.2 69.6 Z" fill="#2e922e"/><path d="M11.1 66.8 L15.7 66.8 L13.4 63.0 Z" fill="#2e922e"/>
<path d="M37.5 65.3 L40.7 68.5 L43.9 65.3" fill="none" stroke="#1f8f4f" stroke-width="1.5"/>
<path d="M241.70 89 L247.70 89 L244.70 92 Z" fill="#333"/>
<path d="M421.90 89 L427.90 89 L424.90 92 Z" fill="#333"/>
<path d="M653.80 89 L659.80 89 L656.80 92 Z" fill="#333"/>
<path d="M867.15 89 L873.15 89 L870.15 92 Z" fill="#333"/>
<path d="M1032.00 89 L1038.00 89 L1035.00 92 Z" fill="#333"/>
<path d="M1237.25 89 L1243.25 89 L1240.25 92 Z" fill="#333"/>
<rect x="1265.5" y="83.5" width="8.5" height="10" fill="#fff" stroke="#8ea6c6" stroke-width="0.9"/><path d="M1267.3 86.2h5M1267.3 88.2h5M1267.3 90.2h5" stroke="#a8b8cc" stroke-width="0.7"/><path d="M1262.3 88 L1262.3 95 L1269.3 95 Z" fill="#2a962a"/><path d="M1264 93.3 L1269.5 87.8" stroke="#2a962a" stroke-width="1.6"/><path d="M1267.3 97.2 L1273 91.2 L1278.7 97.2 Z" fill="#f2c24a" stroke="#d8962a" stroke-width="0.7"/>
<rect x="1296.5" y="83.5" width="8.5" height="10" fill="#fff" stroke="#8ea6c6" stroke-width="0.9"/><path d="M1298.3 86.2h5M1298.3 88.2h5M1298.3 90.2h5" stroke="#a8b8cc" stroke-width="0.7"/><path d="M1309.3 88 L1309.3 95 L1302.3 95 Z" fill="#2a962a"/><path d="M1307.6 93.3 L1302.1 87.8" stroke="#2a962a" stroke-width="1.6"/><path d="M1293.5 97.2 L1299.2 91.2 L1304.9 97.2 Z" fill="#f2c24a" stroke="#d8962a" stroke-width="0.7"/>
<path d="M647.70 168.00 L654.70 168.00 L651.20 164.00 Z" fill="#c4c4c4"/>
<rect x="647.95" y="178.00" width="6.5" height="208.00" rx="3.25" fill="#d8d8d8"/>
<rect x="647.95" y="178.00" width="6.5" height="116.50" rx="3.25" fill="#9c9c9c"/>
<path d="M647.70 396.00 L654.70 396.00 L651.20 400.00 Z" fill="#444"/>
<path d="M23.80 411.50 L23.80 418.50 L19.80 415.00 Z" fill="#444"/>
<rect x="33.20" y="411.60" width="589.80" height="6.8" rx="3.4" fill="#d8d8d8"/>
<rect x="47.70" y="411.60" width="406.60" height="6.8" rx="3.4" fill="#9c9c9c"/>
<path d="M632.40 411.50 L632.40 418.50 L636.40 415.00 Z" fill="#444"/>
<g>
<line x1="721.50" y1="156" x2="721.50" y2="378.20" stroke="#b8b8b8" stroke-width="1"/>
<line x1="731.50" y1="156" x2="731.50" y2="368.70" stroke="#c8c8c8" stroke-width="1.6"/>
<line x1="1202.5" y1="156" x2="1202.5" y2="368.70" stroke="#b8b8b8" stroke-width="1"/>
<line x1="731.50" y1="368.70" x2="1202.5" y2="368.70" stroke="#b8b8b8" stroke-width="1.2"/>
<line x1="720.50" y1="378.70" x2="731.50" y2="368.70" stroke="#b8b8b8" stroke-width="1"/>
<line x1="731.50" y1="320.70" x2="1202.5" y2="320.70" stroke="#b8b8b8" stroke-width="1.2"/>
<line x1="720.50" y1="330.70" x2="731.50" y2="320.70" stroke="#b8b8b8" stroke-width="1"/>
<line x1="731.50" y1="272.70" x2="1202.5" y2="272.70" stroke="#b8b8b8" stroke-width="1.2"/>
<line x1="720.50" y1="282.70" x2="731.50" y2="272.70" stroke="#b8b8b8" stroke-width="1"/>
<line x1="731.50" y1="224.70" x2="1202.5" y2="224.70" stroke="#b8b8b8" stroke-width="1.2"/>
<line x1="720.50" y1="234.70" x2="731.50" y2="224.70" stroke="#b8b8b8" stroke-width="1"/>
<line x1="731.50" y1="176.70" x2="1202.5" y2="176.70" stroke="#b8b8b8" stroke-width="1.2"/>
<line x1="720.50" y1="186.70" x2="731.50" y2="176.70" stroke="#b8b8b8" stroke-width="1"/>
<line x1="721.50" y1="378.20" x2="1193" y2="378.20" stroke="#b8b8b8" stroke-width="1.2"/>
<line x1="1193" y1="378.20" x2="1202.5" y2="368.70" stroke="#b8b8b8" stroke-width="1"/>
</g>
<clipPath id="plotclip"><rect x="667" y="156.2" width="640" height="260"/></clipPath>
<g clip-path="url(#plotclip)">
<rect x="747.30" y="330.19" width="21.00" height="48.01" fill="#d12b38"/>
<polygon points="767.90,330.19 778.50,320.19 778.50,368.70 767.90,378.20" fill="#8b0000"/>
<polygon points="747.30,330.49 757.50,320.19 778.50,320.19 768.30,330.49" fill="#ff5c6a"/>
<polygon points="768.30,378.50 778.50,368.20 799.50,368.20 789.30,378.50" fill="#ffff3a"/>
<rect x="789.30" y="330.19" width="21.00" height="48.01" fill="#19cc19"/>
<polygon points="809.90,330.19 820.50,320.19 820.50,368.70 809.90,378.20" fill="#008b00"/>
<polygon points="789.30,330.49 799.50,320.19 820.50,320.19 810.30,330.49" fill="#55ff55"/>
<polygon points="810.30,378.50 820.50,368.20 841.50,368.20 831.30,378.50" fill="#55f2ff"/>
<rect x="831.30" y="330.19" width="21.00" height="48.01" fill="#1a1acc"/>
<polygon points="851.90,330.19 862.50,320.19 862.50,368.70 851.90,378.20" fill="#00008b"/>
<polygon points="831.30,330.49 841.50,320.19 862.50,320.19 852.30,330.49" fill="#5858ff"/>
<rect x="904.35" y="265.40" width="21.00" height="112.80" fill="#d12b38"/>
<polygon points="924.95,265.40 935.55,255.40 935.55,368.70 924.95,378.20" fill="#8b0000"/>
<polygon points="904.35,265.70 914.55,255.40 935.55,255.40 925.35,265.70" fill="#ff5c6a"/>
<polygon points="925.35,378.50 935.55,368.20 956.55,368.20 946.35,378.50" fill="#ffff3a"/>
<rect x="946.35" y="265.40" width="21.00" height="112.80" fill="#19cc19"/>
<polygon points="966.95,265.40 977.55,255.40 977.55,368.70 966.95,378.20" fill="#008b00"/>
<polygon points="946.35,265.70 956.55,255.40 977.55,255.40 967.35,265.70" fill="#55ff55"/>
<rect x="967.35" y="330.19" width="21.00" height="48.01" fill="#1aafe2"/>
<polygon points="987.95,330.19 998.55,320.19 998.55,368.70 987.95,378.20" fill="#0080a8"/>
<polygon points="967.35,330.49 977.55,320.19 998.55,320.19 988.35,330.49" fill="#55f2ff"/>
<rect x="988.35" y="217.39" width="21.00" height="160.81" fill="#1a1acc"/>
<polygon points="1008.95,217.39 1019.55,207.39 1019.55,368.70 1008.95,378.20" fill="#00008b"/>
<polygon points="988.35,217.69 998.55,207.39 1019.55,207.39 1009.35,217.69" fill="#5858ff"/>
<rect x="1061.40" y="223.40" width="21.00" height="154.80" fill="#d12b38"/>
<polygon points="1082.00,223.40 1092.60,213.40 1092.60,368.70 1082.00,378.20" fill="#8b0000"/>
<polygon points="1061.40,223.70 1071.60,213.40 1092.60,213.40 1082.40,223.70" fill="#ff5c6a"/>
<polygon points="1082.40,378.50 1092.60,368.20 1113.60,368.20 1103.40,378.50" fill="#ffff3a"/>
<rect x="1103.40" y="223.40" width="21.00" height="154.80" fill="#19cc19"/>
<polygon points="1124.00,223.40 1134.60,213.40 1134.60,368.70 1124.00,378.20" fill="#008b00"/>
<polygon points="1103.40,223.70 1113.60,213.40 1134.60,213.40 1124.40,223.70" fill="#55ff55"/>
<rect x="1124.40" y="217.39" width="21.00" height="160.81" fill="#1aafe2"/>
<polygon points="1145.00,217.39 1155.60,207.39 1155.60,368.70 1145.00,378.20" fill="#0080a8"/>
<polygon points="1124.40,217.69 1134.60,207.39 1155.60,207.39 1145.40,217.69" fill="#55f2ff"/>
<rect x="1145.40" y="62.59" width="21.00" height="315.61" fill="#1a1acc"/>
<polygon points="1166.00,62.59 1176.60,52.59 1176.60,368.70 1166.00,378.20" fill="#00008b"/>
<polygon points="1145.40,62.89 1155.60,52.59 1176.60,52.59 1166.40,62.89" fill="#5858ff"/>
</g>
<path d="M1302.80 168.30 L1309.80 168.30 L1306.30 164.30 Z" fill="#444"/>
<rect x="1303.05" y="177.20" width="6.5" height="209.30" rx="3.25" fill="#d8d8d8"/>
<rect x="1303.05" y="266.00" width="6.5" height="120.50" rx="3.25" fill="#9c9c9c"/>
<path d="M1302.80 396.20 L1309.80 396.20 L1306.30 400.20 Z" fill="#444"/>
<path d="M679.30 411.30 L679.30 418.30 L675.30 414.80 Z" fill="#c4c4c4"/>
<rect x="689.00" y="411.40" width="588.50" height="6.8" rx="3.4" fill="#d8d8d8"/>
<rect x="689.00" y="411.40" width="511.80" height="6.8" rx="3.4" fill="#9c9c9c"/>
<path d="M1287.20 411.30 L1287.20 418.30 L1291.20 414.80 Z" fill="#444"/>
<path d="M647.50 481.30 L654.50 481.30 L651.00 477.30 Z" fill="#c4c4c4"/>
<rect x="647.75" y="491.00" width="6.5" height="238.00" rx="3.25" fill="#d8d8d8"/>
<rect x="647.75" y="491.00" width="6.5" height="125.50" rx="3.25" fill="#9c9c9c"/>
<path d="M647.50 739.10 L654.50 739.10 L651.00 743.10 Z" fill="#444"/>
<path d="M23.80 754.50 L23.80 761.50 L19.80 758.00 Z" fill="#c4c4c4"/>
<rect x="33.40" y="754.60" width="589.40" height="6.8" rx="3.4" fill="#d8d8d8"/>
<rect x="33.40" y="754.60" width="375.00" height="6.8" rx="3.4" fill="#9c9c9c"/>
<path d="M632.30 754.50 L632.30 761.50 L636.30 758.00 Z" fill="#444"/>
<clipPath id="pieclip"><rect x="667" y="463" width="600" height="288.2"/></clipPath>
<g clip-path="url(#pieclip)">
<path d="M868.40 613.90 L868.40 462.70 A151.20 151.20 0 0 1 1000.65 540.61 Z" fill="#ffde00" stroke="#ffde00" stroke-width="0.6"/>
<path d="M868.40 613.90 L1000.65 540.61 A151.20 151.20 0 0 1 1004.40 679.97 Z" fill="#19cc19" stroke="#19cc19" stroke-width="0.6"/>
<path d="M868.40 613.90 L1004.40 679.97 A151.20 151.20 0 0 1 784.90 739.95 Z" fill="#1a1acc" stroke="#1a1acc" stroke-width="0.6"/>
<path d="M868.40 613.90 L784.90 739.95 A151.20 151.20 0 0 1 868.40 462.70 Z" fill="#cc19ff" stroke="#cc19ff" stroke-width="0.6"/>
</g>
<path d="M1302.80 473.70 L1309.80 473.70 L1306.30 469.70 Z" fill="#c4c4c4"/>
<rect x="1303.05" y="484.20" width="6.5" height="244.40" rx="3.25" fill="#d8d8d8"/>
<rect x="1303.05" y="484.20" width="6.5" height="219.80" rx="3.25" fill="#9c9c9c"/>
<path d="M1302.80 739.10 L1309.80 739.10 L1306.30 743.10 Z" fill="#444"/>
<path d="M679.30 754.30 L679.30 761.30 L675.30 757.80 Z" fill="#c4c4c4"/>
<rect x="689.00" y="754.40" width="588.50" height="6.8" rx="3.4" fill="#d8d8d8"/>
<rect x="689.00" y="754.40" width="511.80" height="6.8" rx="3.4" fill="#9c9c9c"/>
<path d="M1287.20 754.30 L1287.20 761.30 L1291.20 757.80 Z" fill="#444"/>
</svg>
</body></html>
